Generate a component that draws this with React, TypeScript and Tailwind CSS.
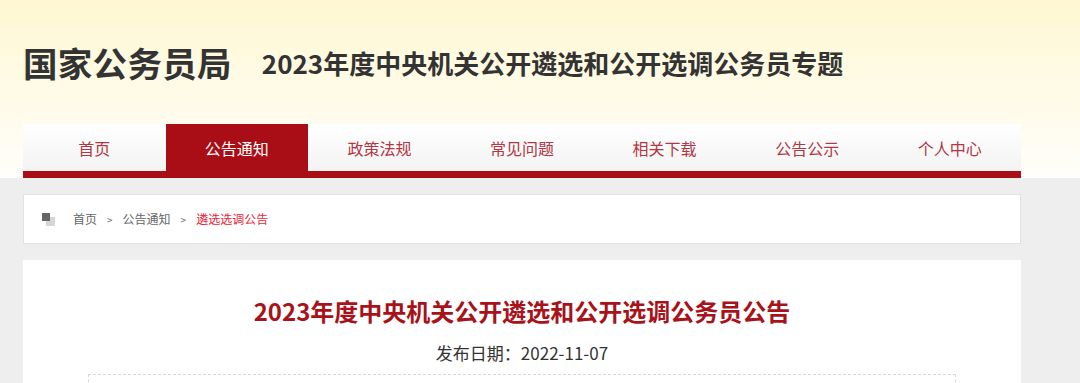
import React from "react";

const navItems = ["首页", "公告通知", "政策法规", "常见问题", "相关下载", "公告公示", "个人中心"];

const font = { fontFamily: '"Noto Sans CJK SC", "Noto Sans", sans-serif' };

const App: React.FC = () => {
  return (
    <div className="w-[1080px] min-h-[383px] bg-[#eeeeee] overflow-hidden" style={font}>
      {/* header */}
      <div className="bg-gradient-to-b from-[#fff7d2] to-[#fffefa]">
        <div className="ml-[23px] w-[998px]">
          <div className="h-[124px] flex items-center">
            <h1 className="text-[34.5px] font-bold text-[#333] tracking-[0.3px] leading-none">国家公务员局</h1>
            <h2 className="ml-[30px] text-[26px] font-bold text-[#333] leading-none mt-[2px]">
              2023年度中央机关公开遴选和公开选调公务员专题
            </h2>
          </div>

          {/* nav */}
          <div className="flex h-[47px] bg-gradient-to-b from-white to-[#f3f3f3]">
            {navItems.map((item) => (
              <div
                key={item}
                className={
                  item === "公告通知"
                    ? "flex-1 flex items-center justify-center bg-[#a90e16] text-white text-[16px]"
                    : "flex-1 flex items-center justify-center text-[#b23644] text-[16px]"
                }
              >
                {item}
              </div>
            ))}
          </div>
          <div className="h-[7px] bg-[#a90e16]" />
        </div>
      </div>

      {/* body */}
      <div className="ml-[23px] w-[998px] pt-[16px]">
        <div className="h-[50px] bg-white border border-[#e2e2e2] flex items-center pl-[18px] text-[12px] text-[#666]">
          <span className="relative w-[14px] h-[14px] mr-[17px] mt-[1px]">
            <span className="absolute left-[4px] top-[4px] w-[9px] h-[9px] bg-[#d6d6d6]" />
            <span className="absolute left-0 top-0 w-[8px] h-[8px] bg-[#666]" />
          </span>
          <span>首页</span>
          <span className="mx-[10px] text-[10px]">&gt;</span>
          <span>公告通知</span>
          <span className="mx-[10px] text-[10px]">&gt;</span>
          <span className="text-[#e4283a]">遴选选调公告</span>
        </div>

        <div className="mt-[16px] bg-white h-[200px] flex flex-col items-center">
          <h3 className="mt-[35px] text-[24px] font-bold text-[#a8121b] leading-[32px]">
            2023年度中央机关公开遴选和公开选调公务员公告
          </h3>
          <p className="mt-[14px] text-[17px] text-[#333] leading-[24px]">发布日期：2022-11-07</p>
          <div className="mt-[9px] w-[868px] h-[60px] border border-dashed border-[#d8d8d8]" />
        </div>
      </div>
    </div>
  );
};

export default App;
